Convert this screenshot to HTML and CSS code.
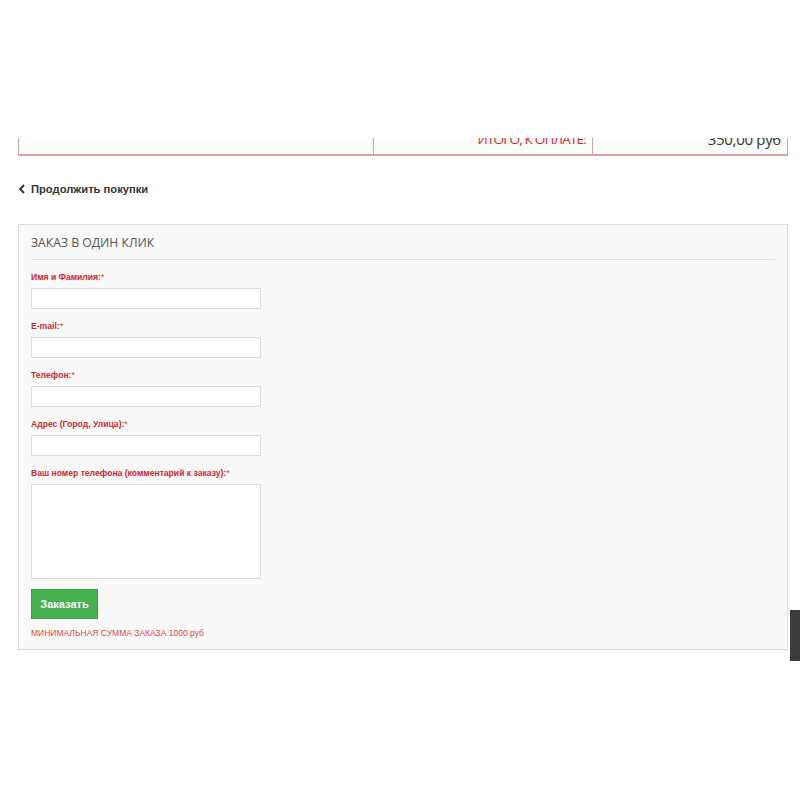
FILE: index.html
```html
<!DOCTYPE html>
<html lang="ru">
<head>
<meta charset="utf-8">
<title>Заказ в один клик</title>
<link rel="stylesheet" href="styles.css">
</head>
<body>
<div class="page">
  <div class="cart-clip">
    <table class="cart-total">
      <tr>
        <td class="c1"></td>
        <td class="c2">ИТОГО, К ОПЛАТЕ:</td>
        <td class="c3">350,00 руб</td>
      </tr>
    </table>
  </div>

  <a class="back" href="#">
    <svg class="chev" width="8" height="10" viewBox="0 0 8 10"><path d="M6 1 L2.2 5 L6 9" fill="none" stroke="#333" stroke-width="2"/></svg>
    <span>Продолжить покупки</span>
  </a>

  <div class="panel">
    <div class="panel-title">ЗАКАЗ В ОДИН КЛИК</div>
    <div class="field">
      <label>Имя и Фамилия:<span class="req">*</span></label>
      <input type="text">
    </div>
    <div class="field">
      <label>E-mail:<span class="req">*</span></label>
      <input type="text">
    </div>
    <div class="field">
      <label>Телефон:<span class="req">*</span></label>
      <input type="text">
    </div>
    <div class="field">
      <label>Адрес (Город, Улица):<span class="req">*</span></label>
      <input type="text">
    </div>
    <div class="field">
      <label>Ваш номер телефона (комментарий к заказу):<span class="req">*</span></label>
      <textarea></textarea>
    </div>
    <button class="btn" type="button">Заказать</button>
    <div class="min-note">МИНИМАЛЬНАЯ СУММА ЗАКАЗА 1000 руб</div>
  </div>
</div>
<div class="side-tab"></div>
</body>
</html>
```

FILE: styles.css
```css
html, body {
  margin: 0;
  padding: 0;
  background: #fff;
}
body {
  font-family: "Liberation Sans", Arial, sans-serif;
  color: #333;
}
.page {
  padding: 138px 12px 0 18px;
}
.cart-clip {
  height: 18px;
  overflow: hidden;
  display: flex;
  flex-direction: column;
  justify-content: flex-end;
}
.cart-total {
  width: 770px;
  border-collapse: collapse;
  flex: none;
}
.cart-total td {
  height: 30px;
  padding: 0 6px;
  background: #fcfcfc;
  border-left: 1px solid #d9a3a3;
  border-right: 1px solid #d9a3a3;
  border-bottom: 2px solid #d9a3a3;
  vertical-align: middle;
  font-family: "Open Sans", sans-serif;
  white-space: nowrap;
}
.cart-total .c1 { width: 342px; }
.cart-total .c2 {
  width: 206px;
  text-align: right;
  color: #e3262e;
  font-size: 13.5px;
  letter-spacing: -0.8px;
}
.cart-total .c3 {
  text-align: right;
  color: #333;
  font-size: 15px;
  letter-spacing: -0.3px;
}
.back {
  display: flex;
  align-items: center;
  gap: 5px;
  margin-top: 26px;
  height: 14px;
  text-decoration: none;
  color: #333;
  font-weight: bold;
  font-size: 11.2px;
  width: max-content;
}
.chev { display: block; }
.panel {
  margin-top: 28px;
  width: 744px;
  border: 1px solid #ddd;
  background: #f9f9f9;
  padding: 9px 12px 10px 12px;
}
.panel-title {
  font-family: "Open Sans", sans-serif;
  font-size: 12.2px;
  line-height: 18px;
  color: #555;
  padding-bottom: 7px;
  border-bottom: 1px solid #ddd;
  margin-bottom: 11px;
}
.field {
  display: flex;
  flex-direction: column;
  margin-bottom: 11px;
}
.field label {
  font-size: 8.6px;
  font-weight: bold;
  line-height: 12px;
  color: #cf2a2e;
  margin-bottom: 5px;
}
.req {
  font-weight: normal;
  color: #d33;
}
.field input, .field textarea {
  box-sizing: border-box;
  width: 230px;
  height: 21px;
  border: 1px solid #ddd;
  background: #fff;
  margin: 0;
  padding: 2px 4px;
  font: inherit;
}
.field textarea {
  height: 95px;
  resize: none;
  display: block;
}
.btn {
  display: block;
  margin-top: -1px;
  height: 30px;
  width: 67px;
  border: 1px solid #3f9f45;
  background: #47b04f;
  color: #fff;
  font-family: "Liberation Sans", Arial, sans-serif;
  font-weight: bold;
  font-size: 11px;
  padding: 0;
  cursor: pointer;
}
.min-note {
  margin-top: 8px;
  font-size: 8.5px;
  line-height: 12px;
  color: #e0474d;
}
.side-tab {
  position: absolute;
  left: 790px;
  top: 610px;
  width: 10px;
  height: 51px;
  background: #3b3b3b;
}
```
